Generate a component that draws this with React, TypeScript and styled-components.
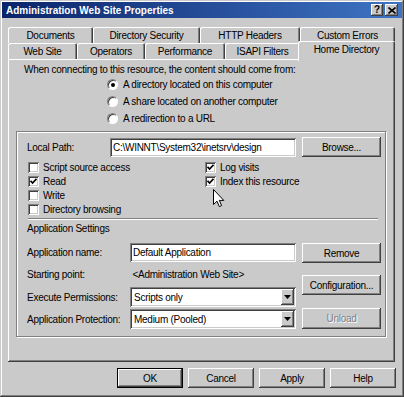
import React from 'react';
import styled, { createGlobalStyle, css } from 'styled-components';

const FACE = '#cacaca';

const Global = createGlobalStyle`
  html, body { margin: 0; padding: 0; background: ${FACE}; }
  body {
    font-family: "Liberation Sans", Arial, sans-serif;
    font-size: 10px;
    letter-spacing: -0.27px;
    color: #000;
  }
  * { box-sizing: border-box; }
`;

const raised = css`
  box-shadow: inset -1px -1px #404040, inset 1px 1px #ffffff, inset -2px -2px #808080, inset 2px 2px ${FACE};
`;

const sunken = css`
  box-shadow: inset 1px 1px #808080, inset -1px -1px #ffffff, inset 2px 2px #404040, inset -2px -2px ${FACE};
`;

const Window = styled.div`
  position: relative;
  width: 404px;
  height: 397px;
  background: ${FACE};
  padding: 2px;
  display: flex;
  flex-direction: column;
  box-shadow: inset -1px -1px #404040, inset 1px 1px ${FACE}, inset -2px -2px #808080, inset 2px 2px #ffffff;
`;

const TitleBar = styled.div`
  height: 16px;
  display: flex;
  align-items: center;
  padding: 0 4px 0 4px;
  background: linear-gradient(90deg, #0a246a 0%, #3f74c4 100%);
`;

const TitleText = styled.span`
  color: #fff;
  font-weight: bold;
  font-size: 10px;
  letter-spacing: 0;
`;

const CaptionButtons = styled.div`
  margin-left: auto;
  display: flex;
  gap: 2px;
`;

const CaptionButton = styled.div<{ $w: number }>`
  width: ${(p) => p.$w}px;
  height: 12px;
  background: ${FACE};
  ${raised};
  display: flex;
  align-items: center;
  justify-content: center;
  font-weight: bold;
  font-size: 10px;
  line-height: 1;
`;

const Content = styled.div`
  padding: 9px 7px 0 6px;
  display: flex;
  flex-direction: column;
`;

const TabRow = styled.div`
  display: flex;
  height: 16px;
  align-items: flex-end;
`;

const Tab = styled.div<{ $w: number; $active?: boolean }>`
  width: ${(p) => p.$w}px;
  height: ${(p) => (p.$active ? 20 : 16)}px;
  margin-bottom: ${(p) => (p.$active ? -2 : 0)}px;
  margin-left: ${(p) => (p.$active ? -2 : 0)}px;
  position: relative;
  z-index: ${(p) => (p.$active ? 2 : 0)};
  background: ${FACE};
  border-radius: 2px 2px 0 0;
  box-shadow: inset 1px 1px #ffffff, inset -1px 0 #404040, inset -2px 0 #808080;
  display: flex;
  align-items: ${(p) => (p.$active ? 'flex-start' : 'center')};
  padding-top: ${(p) => (p.$active ? 3 : 0)}px;
  justify-content: center;
  white-space: nowrap;
`;

const Panel = styled.div`
  position: relative;
  z-index: 1;
  height: 303px;
  background: ${FACE};
  box-shadow: inset -1px -1px #404040, inset 1px 1px #ffffff, inset -2px -2px #808080;
  padding: 4px 9px 0 8px;
  display: flex;
  flex-direction: column;
`;

const Intro = styled.div`
  height: 13px;
  line-height: 13px;
  margin-left: 8px;
`;

const RadioList = styled.div`
  margin-left: 91px;
  display: flex;
  flex-direction: column;
`;

const RadioRow = styled.div`
  height: 17px;
  display: flex;
  align-items: center;
  gap: 5px;
`;

const RadioCircle = styled.span<{ $on?: boolean }>`
  width: 11px;
  height: 11px;
  border-radius: 50%;
  background: #fff;
  border: 1px solid;
  border-color: #808080 #ffffff #ffffff #808080;
  box-shadow: inset 1px 1px #404040;
  display: flex;
  align-items: center;
  justify-content: center;
  &::after {
    content: '';
    width: 4px;
    height: 4px;
    border-radius: 50%;
    background: ${(p) => (p.$on ? '#000' : 'transparent')};
  }
`;

const Group = styled.div`
  margin-top: 4px;
  height: 206px;
  border: 1px solid #808080;
  box-shadow: inset 1px 1px #ffffff, 1px 1px #ffffff;
  padding: 5px 4px 0 10px;
  display: flex;
  flex-direction: column;
`;

const PathRow = styled.div`
  height: 20px;
  display: flex;
  align-items: center;
`;

const Label = styled.span<{ $w?: number }>`
  width: ${(p) => (p.$w ? `${p.$w}px` : 'auto')};
  flex: none;
  white-space: nowrap;
`;

const Field = styled.div<{ $w: number }>`
  width: ${(p) => p.$w}px;
  height: 19px;
  background: #fff;
  ${sunken};
  display: flex;
  align-items: center;
  padding: 0 3px;
  white-space: nowrap;
  overflow: hidden;
`;

const Button = styled.div<{ $w: number; $h?: number; $disabled?: boolean; $default?: boolean }>`
  width: ${(p) => p.$w}px;
  height: ${(p) => p.$h ?? 20}px;
  flex: none;
  background: ${FACE};
  display: flex;
  align-items: center;
  justify-content: center;
  white-space: nowrap;
  ${(p) =>
    p.$default
      ? css`
          border: 1px solid #000;
          box-shadow: inset -1px -1px #404040, inset 1px 1px #ffffff, inset -2px -2px #808080;
        `
      : raised};
  color: ${(p) => (p.$disabled ? '#808080' : '#000')};
  text-shadow: ${(p) => (p.$disabled ? '1px 1px #ffffff' : 'none')};
`;

const Checks = styled.div`
  margin-top: 3px;
  display: flex;
`;

const CheckCol = styled.div<{ $w?: number }>`
  width: ${(p) => (p.$w ? `${p.$w}px` : 'auto')};
  margin-left: 1px;
  display: flex;
  flex-direction: column;
`;

const CheckRow = styled.div`
  height: 14px;
  display: flex;
  align-items: center;
  gap: 4px;
`;

const CheckBox = styled.span`
  width: 11px;
  height: 11px;
  flex: none;
  background: #fff;
  ${sunken};
  display: flex;
  align-items: center;
  justify-content: center;
`;

const Separator = styled.div`
  margin: 2px 3px 0 1px;
  height: 2px;
  border-top: 1px solid #808080;
  border-bottom: 1px solid #ffffff;
`;

const SectionTitle = styled.div`
  margin-top: 2px;
  height: 13px;
  line-height: 13px;
`;

const AppArea = styled.div`
  margin-top: 7px;
  display: flex;
  gap: 6px;
`;

const AppGrid = styled.div`
  display: grid;
  grid-template-columns: 103px 166px;
  grid-template-rows: 21px 23px 22px 22px;
  align-items: center;
`;

const AppButtons = styled.div`
  display: flex;
  flex-direction: column;
`;

const Spacer = styled.div<{ $h?: number; $w?: number }>`
  height: ${(p) => p.$h ?? 0}px;
  width: ${(p) => p.$w ?? 0}px;
  flex: none;
`;

const Combo = styled.div`
  width: 166px;
  height: 20px;
  background: #fff;
  ${sunken};
  display: flex;
  align-items: center;
  padding: 2px 2px 2px 4px;
`;

const ComboText = styled.span`
  flex: 1;
  white-space: nowrap;
`;

const ComboArrow = styled.span`
  width: 13px;
  height: 16px;
  background: ${FACE};
  ${raised};
  display: flex;
  align-items: center;
  justify-content: center;
`;

const Footer = styled.div`
  margin-top: 6px;
  margin-right: -1px;
  display: flex;
  justify-content: flex-end;
  gap: 5px;
`;

const Cursor = styled.svg`
  position: absolute;
  left: 213px;
  top: 189px;
  z-index: 5;
`;

const Check = () => (
  <svg width="7" height="7" viewBox="0 0 7 7">
    <path d="M0.5 2.8 L2.6 5 L6.5 0.8" stroke="#000" strokeWidth="1.7" fill="none" />
  </svg>
);

const Arrow = () => (
  <svg width="7" height="4" viewBox="0 0 7 4">
    <path d="M0 0 H7 L3.5 4 Z" fill="#000" />
  </svg>
);

const tabsBack = [
  { t: 'Documents', w: 85 },
  { t: 'Directory Security', w: 107 },
  { t: 'HTTP Headers', w: 100 },
  { t: 'Custom Errors', w: 95 },
];

const tabsFront = [
  { t: 'Web Site', w: 69 },
  { t: 'Operators', w: 68 },
  { t: 'Performance', w: 80 },
  { t: 'ISAPI Filters', w: 75 },
];

export default function App() {
  return (
    <>
      <Global />
      <Window>
        <TitleBar>
          <TitleText>Administration Web Site Properties</TitleText>
          <CaptionButtons>
            <CaptionButton $w={12}>?</CaptionButton>
            <CaptionButton $w={13}>
              <svg width="8" height="7" viewBox="0 0 8 7">
                <path d="M0.5 0.5 L7.5 6.5 M7.5 0.5 L0.5 6.5" stroke="#000" strokeWidth="1.6" />
              </svg>
            </CaptionButton>
          </CaptionButtons>
        </TitleBar>
        <Content>
          <TabRow>
            {tabsBack.map((x) => (
              <Tab key={x.t} $w={x.w}>{x.t}</Tab>
            ))}
          </TabRow>
          <TabRow>
            {tabsFront.map((x) => (
              <Tab key={x.t} $w={x.w}>{x.t}</Tab>
            ))}
            <Tab $w={97} $active>Home Directory</Tab>
          </TabRow>
          <Panel>
            <Intro>When connecting to this resource, the content should come from:</Intro>
            <RadioList>
              <RadioRow><RadioCircle $on />A directory located on this computer</RadioRow>
              <RadioRow><RadioCircle />A share located on another computer</RadioRow>
              <RadioRow><RadioCircle />A redirection to a URL</RadioRow>
            </RadioList>
            <Group>
              <PathRow>
                <Label $w={83}>Local Path:</Label>
                <Field $w={186}>C:\WINNT\System32\inetsrv\design</Field>
                <Spacer $w={6} />
                <Button $w={79}>Browse...</Button>
              </PathRow>
              <Checks>
                <CheckCol $w={176}>
                  <CheckRow><CheckBox />Script source access</CheckRow>
                  <CheckRow><CheckBox><Check /></CheckBox>Read</CheckRow>
                  <CheckRow><CheckBox />Write</CheckRow>
                  <CheckRow><CheckBox />Directory browsing</CheckRow>
                </CheckCol>
                <CheckCol>
                  <CheckRow><CheckBox><Check /></CheckBox>Log visits</CheckRow>
                  <CheckRow><CheckBox><Check /></CheckBox>Index this resource</CheckRow>
                </CheckCol>
              </Checks>
              <Separator />
              <SectionTitle>Application Settings</SectionTitle>
              <AppArea>
                <AppGrid>
                  <Label>Application name:</Label>
                  <Field $w={166}>Default Application</Field>
                  <Label>Starting point:</Label>
                  <Label>&nbsp;&lt;Administration Web Site&gt;</Label>
                  <Label>Execute Permissions:</Label>
                  <Combo>
                    <ComboText>Scripts only</ComboText>
                    <ComboArrow><Arrow /></ComboArrow>
                  </Combo>
                  <Label>Application Protection:</Label>
                  <Combo>
                    <ComboText>Medium (Pooled)</ComboText>
                    <ComboArrow><Arrow /></ComboArrow>
                  </Combo>
                </AppGrid>
                <AppButtons>
                  <Spacer $h={1} />
                  <Button $w={79}>Remove</Button>
                  <Spacer $h={12} />
                  <Button $w={79}>Configuration...</Button>
                  <Spacer $h={13} />
                  <Button $w={79} $h={21} $disabled>Unload</Button>
                </AppButtons>
              </AppArea>
            </Group>
          </Panel>
          <Footer>
            <Button $w={66} $default>OK</Button>
            <Button $w={66}>Cancel</Button>
            <Button $w={66}>Apply</Button>
            <Button $w={66}>Help</Button>
          </Footer>
        </Content>
        <Cursor width="12" height="19" viewBox="0 0 12 19">
          <path d="M0.5 0.5 L0.5 15.5 L4 12.2 L6.3 17.6 L8.6 16.6 L6.3 11.4 L10.8 11.4 Z" fill="#fff" stroke="#000" strokeWidth="1" />
        </Cursor>
      </Window>
    </>
  );
}
